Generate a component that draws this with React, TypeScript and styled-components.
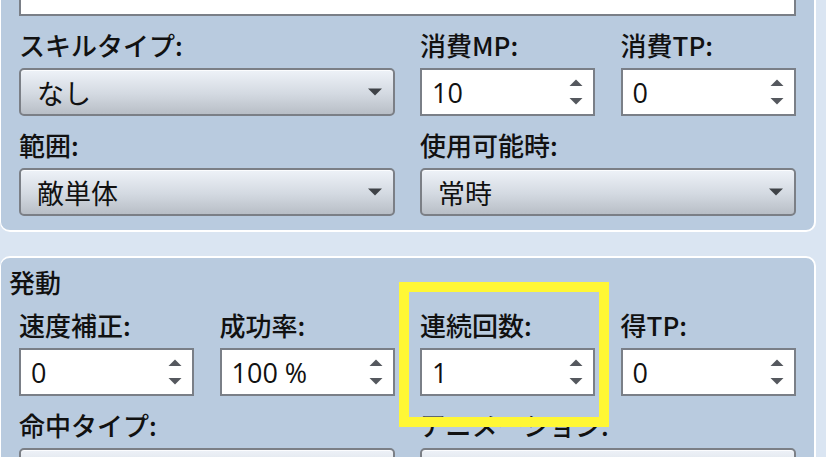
import React from 'react';
import styled, { createGlobalStyle } from 'styled-components';

// -----------------------------------------------------------------------------
// Global
// -----------------------------------------------------------------------------
const GlobalStyle = createGlobalStyle`
  html, body {
    margin: 0;
    padding: 0;
    background: #dae5f2;
    overflow: hidden;
  }
  body {
    width: 826px;
    height: 457px;
    font-family: "Open Sans", "Noto Sans CJK JP", sans-serif;
    color: #111;
  }
`;

// -----------------------------------------------------------------------------
// Styles
// -----------------------------------------------------------------------------
const Page = styled.div`
  width: 816px;
  display: flex;
  flex-direction: column;
  gap: 24px;
`;

const Panel = styled.section<{ $first?: boolean }>`
  margin-top: ${(p) => (p.$first ? '-43px' : '0')};
  background: #b9cbdf;
  border: 2px solid #ffffff;
  border-left-width: 1px;
  border-radius: 10px;
  padding: 9px 18px 14px 8px;
  display: flex;
  flex-direction: column;
  gap: 13px;
`;

const Header = styled.h2`
  margin: 0;
  font-family: "Noto Sans CJK JP", sans-serif;
  font-size: 26px;
  line-height: 30px;
  font-weight: 500;
`;

const Grid = styled.div`
  margin-left: 10px;
  display: grid;
  grid-template-columns: repeat(4, 175px);
  column-gap: 25.5px;
  row-gap: 14px;
`;

const Field = styled.div<{ $span?: number }>`
  grid-column: span ${(p) => p.$span ?? 1};
  display: flex;
  flex-direction: column;
  gap: 8px;
`;

const Label = styled.label`
  font-family: "Noto Sans CJK JP", sans-serif;
  font-size: 26px;
  line-height: 30px;
  font-weight: 500;
  white-space: nowrap;
`;

const TextBox = styled.div<{ $span?: number }>`
  grid-column: span ${(p) => p.$span ?? 1};
  height: 48px;
  box-sizing: border-box;
  background: #ffffff;
  border: 2px solid #7a7f87;
`;

const NumberBox = styled.div`
  height: 48px;
  box-sizing: border-box;
  background: #ffffff;
  border: 2px solid #7a7f87;
  display: flex;
  align-items: center;
  padding: 0 10px;
  font-size: 27px;
`;

const Value = styled.span`
  flex: 1;
  white-space: nowrap;
`;

const SelectBox = styled.div`
  height: 48px;
  box-sizing: border-box;
  border: 2px solid #7b7f86;
  border-radius: 5px;
  background: linear-gradient(#eef2f8, #d3d9e1 55%, #b8bec6);
  box-shadow: inset 0 1px 0 #fbfcfe;
  display: flex;
  align-items: center;
  padding: 0 11px 0 16px;
  font-size: 27px;
`;

const Highlight = styled.div`
  position: absolute;
  left: 399px;
  top: 282px;
  width: 210px;
  height: 145px;
  box-sizing: border-box;
  border: 10px solid #fff735;
  pointer-events: none;
`;

// -----------------------------------------------------------------------------
// Parts
// -----------------------------------------------------------------------------
const Spinner = () => (
  <svg width="14" height="26" viewBox="0 0 14 26">
    <polygon points="7,0.5 13.5,7 0.5,7" fill="#55585e" />
    <polygon points="0.5,19 13.5,19 7,25.5" fill="#55585e" />
  </svg>
);

const Caret = () => (
  <svg width="14" height="8" viewBox="0 0 14 8">
    <polygon points="0,0.5 14,0.5 7,7.5" fill="#3f4247" />
  </svg>
);

const NumberField = ({ label, value }: { label: string; value: string }) => (
  <Field>
    <Label>{label}</Label>
    <NumberBox>
      <Value>{value}</Value>
      <Spinner />
    </NumberBox>
  </Field>
);

const SelectField = ({ label, value }: { label: string; value: string }) => (
  <Field $span={2}>
    <Label>{label}</Label>
    <SelectBox>
      <Value>{value}</Value>
      <Caret />
    </SelectBox>
  </Field>
);

// -----------------------------------------------------------------------------
// App
// -----------------------------------------------------------------------------
const App = () => (
  <>
    <GlobalStyle />
    <Page>
      <Panel $first>
        <Grid>
          <TextBox $span={4} />
          <SelectField label="スキルタイプ:" value="なし" />
          <NumberField label="消費MP:" value="10" />
          <NumberField label="消費TP:" value="0" />
          <SelectField label="範囲:" value="敵単体" />
          <SelectField label="使用可能時:" value="常時" />
        </Grid>
      </Panel>
      <Panel>
        <Header>発動</Header>
        <Grid>
          <NumberField label="速度補正:" value="0" />
          <NumberField label="成功率:" value="100 %" />
          <NumberField label="連続回数:" value="1" />
          <NumberField label="得TP:" value="0" />
          <SelectField label="命中タイプ:" value="" />
          <SelectField label="アニメーション:" value="" />
        </Grid>
      </Panel>
    </Page>
    <Highlight />
  </>
);

export default App;
